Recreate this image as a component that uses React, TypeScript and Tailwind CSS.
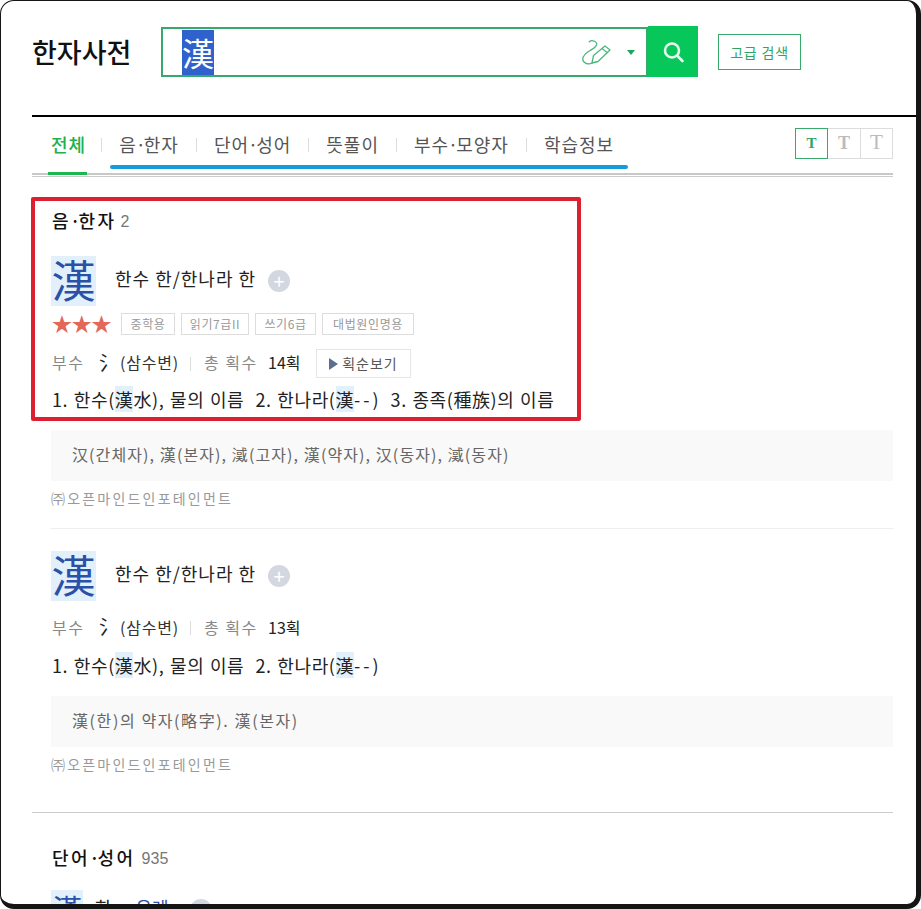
const tabs = ["음·한자", "단어·성어", "뜻풀이", "부수·모양자", "학습정보"];
const tags = [
  { label: "중학용", width: "w-[54px]" },
  { label: "읽기7급II", width: "w-[68px]" },
  { label: "쓰기6급", width: "w-[61px]" },
  { label: "대법원인명용", width: "w-[92px]" },
];

function Hi({ children }: { children: string }) {
  return <span className="inline-block h-[26px] bg-[#e1f0fb] leading-[26px]">{children}</span>;
}

function Dotted({ text }: { text: string }) {
  const parts = text.split("·");
  if (parts.length < 2) return <>{text}</>;
  return (
    <>
      {parts[0]}
      <span className="-ml-[1px] tracking-[-2px]">·</span>
      {parts[1]}
    </>
  );
}

function HanjaHead() {
  return (
    <div className="flex items-center">
      <span className="flex h-[50px] w-[45px] items-center justify-center bg-[#e1f0fb] pb-[4px] text-[44px] leading-none text-[#2b50a8]">漢</span>
      <span className="mb-[6px] ml-[19px] w-[153px] text-[18px] tracking-[1px] text-[#222]">한수 한/한나라 한</span>
      <span className="flex h-[22px] w-[22px] items-center justify-center rounded-full bg-[#d3d7df] text-[20px] leading-none text-white">+</span>
    </div>
  );
}

function InfoRow({ strokes, children }: { strokes: string; children?: React.ReactNode }) {
  return (
    <div className="flex h-full items-center pl-px text-[16px]">
      <span className="mb-[3px] w-[47px] tracking-[1.500px] text-[#888]">부수</span>
      <span className="mb-[2px] w-[21px] text-[20px] leading-none text-[#222]">氵</span>
      <span className="mb-[3px] w-[59px] tracking-[0.8px] text-[#333]">(삼수변)</span>
      <span className="mr-[13px] ml-[11px] h-[14px] w-px bg-[#ddd]" />
      <span className="mb-[3px] w-[64px] tracking-[1.500px] text-[#888]">총 획수</span>
      <span className="mb-[3px] w-[48px] text-[#222]">{strokes}</span>
      {children}
    </div>
  );
}

function GreyBox({ tracking, children }: { tracking: string; children: React.ReactNode }) {
  return <div className={`mt-[18px] flex h-[51px] items-center bg-[#f9f9f9] pb-[3px] pl-[21px] text-[16px] text-[#666] ${tracking}`}>{children}</div>;
}

function Credit() {
  return <div className="mt-[8px] flex h-[20px] items-center pb-[2px] text-[14px] tracking-[2.200px] text-[#999]">㈜오픈마인드인포테인먼트</div>;
}

export default function App() {
  return (
    <div className="relative h-[909px] w-[921px] overflow-hidden rounded-[14px] border-t border-r-[5px] border-b-[5px] border-l border-[#151515] bg-white font-['Noto_Sans_CJK_KR',sans-serif]">
      {/* header */}
      <div className="flex h-[114px] items-start pl-[31px]">
        <h1 className="mt-[33px] w-[99px] text-[27px] leading-[36px] font-medium tracking-[0px] whitespace-nowrap text-[#111]">한자사전</h1>
        <div className="mt-[25px] ml-[30px] flex h-[51px] w-[537px]">
          <div className="mt-px flex h-[50px] w-[487px] items-center border-2 border-[#36a96b] pl-[19px]">
            <span className="flex h-[45px] w-[32px] items-center justify-center bg-[#2f62cc] text-[32px] leading-none text-white">漢</span>
            <svg className="ml-auto h-[26px] w-[30px]" viewBox="0 0 30 26" fill="none" stroke="#4cb87e" strokeWidth="1.300" strokeLinecap="round" strokeLinejoin="round">
              <path d="M8.300 2.700C10 1 15 1.500 15.700 4.700 16 8 12 9.500 9 11.500 5.500 13.500 2 16 1.700 20.300 2 24 7 26 11 24" />
              <path d="M11 24l1.500-7.500L24 7l5 4-12 11.500z" />
              <path d="M21 9.500l5 4" />
            </svg>
            <span className="mr-[11px] ml-[16px] h-0 w-0 border-x-[4px] border-t-[5px] border-x-transparent border-t-[#18a95c]" />
          </div>
          <button type="button" className="flex h-[51px] w-[50px] items-center justify-center bg-[#07c65a]">
            <svg className="h-[24px] w-[24px]" viewBox="0 0 24 24" fill="none" stroke="#e4fbee" strokeWidth="2.600" strokeLinecap="round">
              <circle cx="11" cy="10.500" r="7" />
              <path d="M16.500 16l5 5" />
            </svg>
          </button>
        </div>
        <button type="button" className="mt-[33px] ml-[20px] flex h-[36px] w-[83px] items-center justify-center border border-[#36a96b] text-[14px] tracking-[0.8px] text-[#2fa565]">고급 검색</button>
      </div>
      <div className="ml-[31px] h-[2px] bg-black" />

      <div className="mr-[23px] ml-[31px]">
        {/* tabs */}
        <div className="relative flex h-[58px] items-center justify-between border-b-2 border-[#c8c8c8] pb-[1px]">
          <div className="flex items-center text-[18px] tracking-[1px] text-[#555]">
            <span className="ml-[19px] font-medium tracking-[1px] text-[#22b04f]">전체</span>
            {tabs.map((tab, i) => (
              <span key={tab} className="flex items-center">
                <span className={i === 0 ? "mr-[17px] ml-[15px] h-[14px] w-px bg-[#ddd]" : "mx-[17px] h-[14px] w-px bg-[#ddd]"} />
                <span><Dotted text={tab} /></span>
              </span>
            ))}
          </div>
          <div className="mb-[3px] flex font-['Liberation_Serif',serif] font-bold">
            <span className="flex h-[31px] w-[33px] items-center justify-center border border-[#36a96b] text-[15px] text-[#2fa565]">T</span>
            <span className="flex h-[31px] w-[33px] items-center justify-center border-y border-r border-[#ddd] text-[18px] text-[#bbb]">T</span>
            <span className="flex h-[31px] w-[32px] items-center justify-center border-y border-r border-[#ddd] text-[21px] font-normal text-[#bbb]">T</span>
          </div>
          <span className="absolute bottom-[-2px] left-[16px] h-[3px] w-[39px] bg-[#1eb64f]" />
        </div>
        <div className="mt-px h-px bg-[#ccc]" />

        {/* 음·한자 */}
        <div className="pl-[19px]">
          <div className="mt-[30px] flex h-[30px] items-center pl-px">
            <span className="mb-[3px] text-[18px] font-medium tracking-[2.500px] text-[#111]"><Dotted text="음·한자" /></span>
            <span className="ml-[4px] font-['Liberation_Sans',sans-serif] text-[16px] text-[#777]">2</span>
          </div>
          <div className="mt-[19px]"><HanjaHead /></div>
          <div className="mt-[7px] flex h-[22px] items-center">
            <span className="w-[70px] pl-px text-[20px] leading-none tracking-[-0.3px] text-[#e2685a]">★★★</span>
            <div className="flex gap-[6px]">
              {tags.map((tag) => (
                <span key={tag.label} className={`flex h-[22px] items-center justify-center border border-[#ddd] text-[12px] tracking-[0.6px] text-[#999] ${tag.width}`}>{tag.label}</span>
              ))}
            </div>
          </div>
          <div className="mt-[14px] h-[29px]">
            <InfoRow strokes="14획">
              <span className="flex h-[29px] w-[95px] items-center justify-center gap-[4px] border border-[#e6e6e6] text-[14px] tracking-[1px] text-[#555]">
                <span className="h-0 w-0 border-y-[6px] border-l-[9px] border-y-transparent border-l-[#5d6f8f]" />
                획순보기
              </span>
            </InfoRow>
          </div>
          <div className="mt-[10px] flex h-[24px] items-center pb-[2px] pl-px text-[18px] tracking-[0.6px] [word-spacing:1px] whitespace-pre text-[#222]">
            1. 한수(<Hi>漢</Hi>水), 물의 이름  2. 한나라(<Hi>漢</Hi><span className="tracking-[3px]">--</span>)  3. 종족(種族)의 이름
          </div>
          <GreyBox tracking="tracking-[1.100px]">汉(간체자), 漢(본자), 㵄(고자), 漢(약자), 汉(동자), 㵄(동자)</GreyBox>
          <Credit />
          <div className="mt-[19px] h-px bg-[#eee]" />

          <div className="mt-[22px]"><HanjaHead /></div>
          <div className="mt-[13px] h-[28px]"><InfoRow strokes="13획" /></div>
          <div className="mt-[12px] flex h-[24px] items-center pb-[2px] pl-px text-[18px] tracking-[0.6px] [word-spacing:1px] whitespace-pre text-[#222]">
            1. 한수(<Hi>漢</Hi>水), 물의 이름  2. 한나라(<Hi>漢</Hi><span className="tracking-[3px]">--</span>)
          </div>
          <GreyBox tracking="tracking-[1.600px]">漢(한)의 약자(略字). 漢(본자)</GreyBox>
          <Credit />
        </div>

        <div className="mt-[37px] h-px bg-[#ccc]" />

        {/* 단어·성어 */}
        <div className="pl-[19px]">
          <div className="mt-[31px] flex h-[30px] items-center pl-px">
            <span className="mb-[3px] text-[18px] font-medium tracking-[2.500px] text-[#111]"><Dotted text="단어·성어" /></span>
            <span className="ml-[6px] font-['Liberation_Sans',sans-serif] text-[16px] text-[#777]">935</span>
          </div>
          <div className="mt-[16px] flex items-start">
            <span className="flex h-[36px] w-[32px] items-center justify-center bg-[#e1f0fb] text-[30px] leading-none text-[#2b50a8]">漢</span>
            <span className="mt-[4px] ml-[12px] text-[18px] text-[#222]">한</span>
            <span className="mt-[4px] ml-[24px] text-[18px] text-[#2b50a8]">우레</span>
            <span className="mt-[9px] ml-[21px] h-[22px] w-[22px] rounded-full bg-[#d3d7df]" />
          </div>
        </div>
      </div>

      {/* annotations */}
      <span className="absolute top-[164px] left-[109px] h-[4px] w-[518px] rounded-full bg-[#169bdd]" />
      <div className="absolute top-[196px] left-[30px] h-[224px] w-[550px] rounded-[2px] border-4 border-[#dd2030]" />
    </div>
  );
}
